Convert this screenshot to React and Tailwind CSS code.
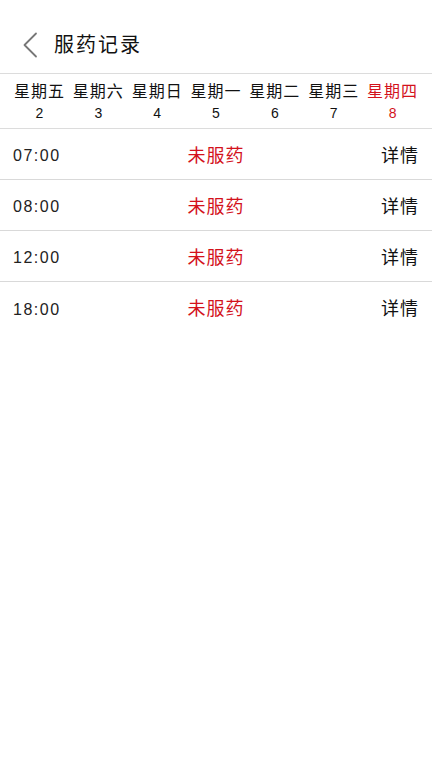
import React from 'react';

const days = [
  { name: '星期五', num: '2' },
  { name: '星期六', num: '3' },
  { name: '星期日', num: '4' },
  { name: '星期一', num: '5' },
  { name: '星期二', num: '6' },
  { name: '星期三', num: '7' },
  { name: '星期四', num: '8', today: true },
];

const times = ['07:00', '08:00', '12:00', '18:00'];

const font = { fontFamily: '"Liberation Sans", "Noto Sans CJK SC", sans-serif' };

export default function App() {
  return (
    <div className="w-[432px] h-[768px] bg-white text-[#222]" style={font}>
      <div className="h-[74px] pt-[16px] flex items-center border-b border-[#dcdcdc]">
        <svg className="ml-[22px] w-[16px] h-[26px]" viewBox="0 0 16 26" fill="none">
          <path d="M14 1.5 L2.5 13 L14 24.5" stroke="#777" strokeWidth="1.8" strokeLinecap="round" strokeLinejoin="round" />
        </svg>
        <div className="ml-[16px] text-[20px] tracking-[2px] text-[#111]">服药记录</div>
      </div>
      <div className="grid grid-cols-7 px-[10px] h-[55px] pt-[2px] items-center border-b border-[#dcdcdc]">
        {days.map((d) => (
          <div key={d.name} className={`flex flex-col items-center ${d.today ? 'text-[#d3121c]' : 'text-[#111]'}`}>
            <div className="text-[16px] leading-[20px] tracking-[1px]">{d.name}</div>
            <div className="text-[14px] leading-[18px] mt-[2px]">{d.num}</div>
          </div>
        ))}
      </div>
      {times.map((t, i) => (
        <div
          key={t}
          className={`h-[51px] pt-[4px] flex items-center px-[13px] ${i < times.length - 1 ? 'border-b border-[#d9d9d9]' : ''}`}
        >
          <div className="w-[80px] text-[16px] tracking-[1.5px] text-[#222]">{t}</div>
          <div className="flex-1 text-center text-[18px] text-[#d3121c] tracking-[1px]">未服药</div>
          <div className="w-[80px] text-right text-[18px] text-[#111] tracking-[1px]">详情</div>
        </div>
      ))}
    </div>
  );
}
